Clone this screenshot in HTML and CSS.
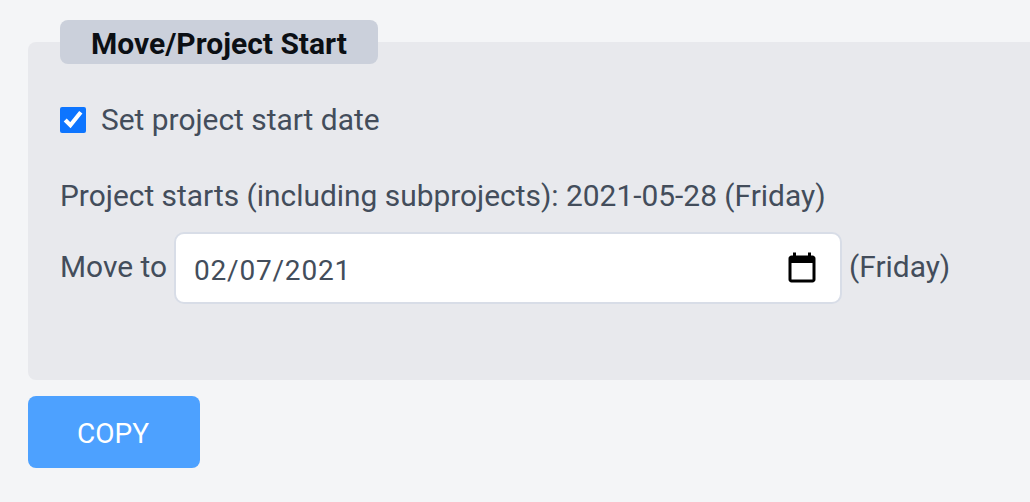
FILE: index.html
```html
<!DOCTYPE html>
<html lang="en">
<head>
    <meta charset="UTF-8">
    <title>Move/Project Start</title>
    <link rel="stylesheet" href="styles.css">
</head>
<body>
    <div class="panel">
        <h2 class="panel-title">Move/Project Start</h2>

        <label class="check-row">
            <input type="checkbox" checked>
            <span>Set project start date</span>
        </label>

        <p class="info">Project starts (including subprojects): 2021-05-28 (Friday)</p>

        <div class="move-row">
            <label for="move-date">Move to</label>
            <div class="date-field">
                <input type="text" id="move-date" value="02/07/2021">
                <svg class="date-icon" viewBox="0 0 24 24" width="36" height="36" aria-hidden="true">
                    <path d="M19 3h-1V1h-2v2H8V1H6v2H5c-1.1 0-2 .9-2 2v14c0 1.1.9 2 2 2h14c1.1 0 2-.9 2-2V5c0-1.1-.9-2-2-2zm0 16H5V8h14v11z"/>
                </svg>
            </div>
            <span>(Friday)</span>
        </div>
    </div>

    <button class="copy-btn">COPY</button>
</body>
</html>
```

FILE: styles.css
```css
html, body {
    height: 100%;
}

body {
    font-family: Roboto, "Liberation Sans", sans-serif;
    font-size: 29.9px;
    line-height: 36px;
    background-color: #f4f5f7;
    color: #434d5b;
    margin: 0;
    padding: 42px 0 0 28px;
    box-sizing: border-box;
    overflow: hidden;
}

.panel {
    height: 338px;
    box-sizing: border-box;
    padding: 0 32px;
    background-color: #e8e9ed;
    border-radius: 8px 0 0 8px;
}

.panel-title {
    position: relative;
    top: -22px;
    width: 318px;
    height: 44px;
    margin: 0;
    font-size: 30px;
    line-height: 48px;
    font-weight: 700;
    text-align: center;
    color: #0b0f14;
    background-color: #cbd0db;
    border-radius: 8px;
}

.check-row {
    display: flex;
    align-items: center;
    gap: 15px;
    margin-top: 16px;
}

.check-row input {
    width: 26px;
    height: 26px;
    margin: 0;
    accent-color: #0d75ff;
}

.info {
    margin: 40px 0 0;
}

.move-row {
    display: flex;
    align-items: center;
    gap: 7px;
    margin-top: 18px;
}

.move-row label,
.move-row span {
    position: relative;
    top: -1px;
}

.date-field {
    display: flex;
    align-items: center;
    width: 668px;
    height: 72px;
    box-sizing: border-box;
    padding: 0 20px 0 18px;
    background-color: #fff;
    border: 2px solid #d8dde7;
    border-radius: 10px;
}

.date-field input {
    flex: 1;
    min-width: 0;
    border: none;
    outline: none;
    padding: 6px 0 0;
    background: none;
    font: inherit;
    font-size: 28px;
    color: inherit;
    letter-spacing: 0.8px;
}

.date-icon {
    margin-top: 2px;
    fill: #000;
}

.copy-btn {
    display: block;
    width: 172px;
    height: 72px;
    margin-top: 16px;
    padding: 4px 8px 0 6px;
    border: none;
    border-radius: 8px;
    background-color: #4da1ff;
    color: #fff;
    font: inherit;
    font-size: 28px;
    cursor: pointer;
}
```
